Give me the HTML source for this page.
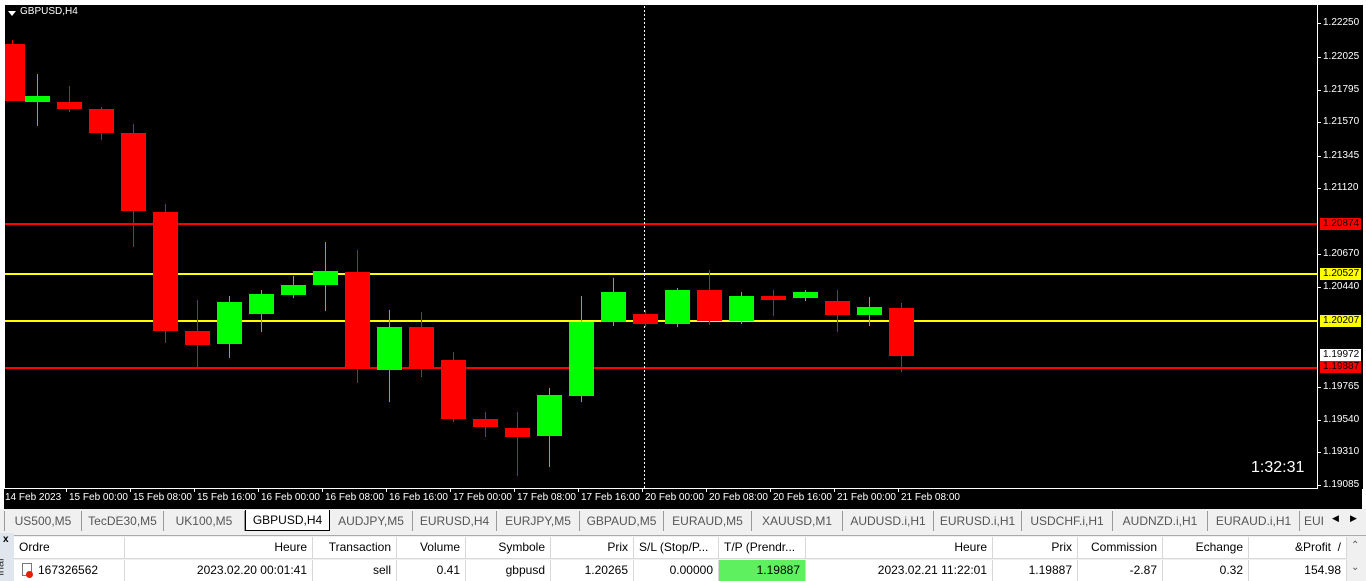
<!DOCTYPE html><html><head><style>
body{margin:0;width:1366px;height:581px;overflow:hidden;background:#f0f0f0;font-family:"Liberation Sans",sans-serif;position:relative}
#ch{position:absolute;left:0;top:0;width:1366px;height:509px;background:#fff}
#blk{position:absolute;left:4px;top:4px;width:1358px;height:484px;background:#000;overflow:hidden;border-top:1px solid #fff;border-left:1px solid #fff}
.a{position:absolute}
.pl{position:absolute;left:1323px;font-size:10px;color:#fff;font-family:"Liberation Sans",sans-serif}
.tl{position:absolute;top:492px;font-size:10px;color:#fff;font-family:"Liberation Sans",sans-serif;white-space:nowrap}
.tab{position:absolute;top:511px;height:20px;line-height:20px;font-size:12px;color:#555;text-align:center;border-right:1px solid #999;box-sizing:border-box}
.th,.td{position:absolute;height:21px;line-height:21px;font-size:12px;color:#000;box-sizing:border-box;border-right:1px solid #d8d8d8;padding:0 5px;text-align:right;white-space:nowrap;overflow:hidden}
.th{top:537px;background:#fff}.td{top:560px;background:#fff}
</style></head><body>
<div id="ch"><div id="blk"></div></div>
<div class="a" style="left:4px;top:488px;width:1358px;height:21px;background:#000"></div>
<div class="a" style="left:1317px;top:4px;width:1px;height:485px;background:#fff"></div>
<div class="a" style="left:4px;top:488px;width:1314px;height:1px;background:#fff"></div>
<div class="a" style="left:8px;top:11px;width:0;height:0;border-left:4px solid transparent;border-right:4px solid transparent;border-top:5px solid #fff"></div>
<div class="a" style="left:20px;top:6px;font-size:10px;color:#fff">GBPUSD,H4</div>
<div class="a" style="left:1251px;top:459px;font-size:16px;color:#fff">1:32:31</div>
<div id="g"></div>
<div id="tabs"></div>
<div class="a" style="left:0;top:533px;width:14px;height:48px;background:#dfe6ee"></div>
<div class="a" style="left:3px;top:534px;font-size:10px;font-weight:bold">x</div>
<div class="a" style="left:-8px;top:561px;font-size:11px;transform:rotate(-90deg);color:#333">inal</div>
<div id="tb"></div>
<script>
var g='';
function d(x,y,w,h,c){g+='<div class="a" style="left:'+x+'px;top:'+y+'px;width:'+w+'px;height:'+h+'px;background:'+c+'"></div>';}
var C=[[12,'r',44,101,40,101],[37,'g',96,102,74,126],[69,'r',102,109,86,112],[101,'r',109,133,107,140],[133,'r',133,211,124,247],[165,'r',212,331,204,343],[197,'r',331,345,300,367],[229,'g',302,344,296,358],[261,'g',294,314,290,332],[293,'g',285,295,276,298],[325,'g',271,285,242,311],[357,'r',272,368,250,383],[389,'g',327,370,310,402],[421,'r',327,368,312,377],[453,'r',360,419,352,422],[485,'r',419,427,412,437],[517,'r',428,437,412,476],[549,'g',395,436,388,467],[581,'g',322,396,296,402],[613,'g',292,322,278,326],[645,'r',314,324,310,327],[677,'g',290,324,288,327],[709,'r',290,321,270,325],[741,'g',296,321,292,324],[773,'r',296,300,290,316],[805,'g',292,298,290,301],[837,'r',301,315,290,332],[869,'g',307,315,297,326],[901,'r',308,356,303,372]];
[[224,'#f00'],[274,'#ff0'],[321,'#ff0'],[368,'#f00']].forEach(function(l){d(5,l[0]-1,1312,2,l[1]);});
for(var y=6;y<488;y+=4)d(644,y,1,2,'#fff');
C.forEach(function(c){var col=c[1]=='r'?'#f00':'#0f0';var x=c[0];d(x,c[4],1,c[5]-c[4],col);var l=x-12;if(l<5)l=5;d(l,c[2],x+13-l,c[3]-c[2],col);});
var P=[['1.22250',23],['1.22025',57],['1.21795',90],['1.21570',122],['1.21345',156],['1.21120',188],['1.20670',254],['1.20440',287],['1.19765',387],['1.19540',420],['1.19310',452],['1.19085',485]];
P.forEach(function(p){d(1318,p[1],3,1,'#fff');g+='<div class="pl" style="top:'+(p[1]-6)+'px">'+p[0]+'</div>';});
[['1.20874',224,'#f00','#000'],['1.20527',274,'#ff0','#000'],['1.20207',321,'#ff0','#000'],['1.19972',355,'#fff','#000'],['1.19887',367,'#f00','#000']].forEach(function(p){g+='<div class="pl" style="left:1320px;top:'+(p[1]-6)+'px;width:41px;height:12px;line-height:12px;background:'+p[2]+';color:'+p[3]+';padding-left:3px;box-sizing:border-box">'+p[0]+'</div>';});
var T=['14 Feb 2023','15 Feb 00:00','15 Feb 08:00','15 Feb 16:00','16 Feb 00:00','16 Feb 08:00','16 Feb 16:00','17 Feb 00:00','17 Feb 08:00','17 Feb 16:00','20 Feb 00:00','20 Feb 08:00','20 Feb 16:00','21 Feb 00:00','21 Feb 08:00'];
T.forEach(function(t,i){var x=5+i*64;if(i>0)d(x-3,488,1,4,'#fff');g+='<div class="tl" style="left:'+x+'px">'+t+'</div>';});
document.getElementById('g').innerHTML=g;
var tabs=[['US500,M5',5,82],['TecDE30,M5',82,164],['UK100,M5',164,245],['GBPUSD,H4',245,330],['AUDJPY,M5',330,413],['EURUSD,H4',413,497],['EURJPY,M5',497,580],['GBPAUD,M5',580,664],['EURAUD,M5',664,752],['XAUUSD,M1',752,843],['AUDUSD.i,H1',843,934],['EURUSD.i,H1',934,1022],['USDCHF.i,H1',1022,1113],['AUDNZD.i,H1',1113,1208],['EURAUD.i,H1',1208,1300],['EUI',1300,1330]],s='<div class="tab" style="left:0;width:5px"></div>';
tabs.forEach(function(t,i){var act=i==3;s+='<div class="tab" style="left:'+t[1]+'px;width:'+(t[2]-t[1])+'px;'+(act?'background:#fff;color:#000;border:1px solid #000;border-top:none;top:510px;height:21px;':'')+(i==15?'border:none;text-align:left;padding-left:4px;':'')+'">'+t[0]+'</div>';});
s+='<div class="a" style="left:1332px;top:513px;font-size:9px">&#9664;</div><div class="a" style="left:1350px;top:513px;font-size:9px">&#9654;</div>';
document.getElementById('tabs').innerHTML=s;
var cols=[14,125,313,397,466,551,634,719,806,993,1078,1163,1249,1347];
var H=['Ordre','Heure','Transaction','Volume','Symbole','Prix','S/L (Stop/P...','T/P (Prendr...','Heure','Prix','Commission','Echange','&amp;Profit &nbsp;/'];
var R=['167326562','2023.02.20 00:01:41','sell','0.41','gbpusd','1.20265','0.00000','1.19887','2023.02.21 11:22:01','1.19887','-2.87','0.32','154.98'];
var t='<div class="a" style="left:14px;top:535px;width:1352px;height:1px;background:#aaa"></div>';
for(var i=0;i<13;i++){var w=cols[i+1]-cols[i];
t+='<div class="th" style="left:'+cols[i]+'px;width:'+w+'px;text-align:'+(i==0||i==6||i==7?'left':'right')+'">'+H[i]+'</div>';
t+='<div class="td" style="left:'+cols[i]+'px;width:'+w+'px;text-align:'+(i==0?'left':'right')+';'+(i==7?'background:#5ef05e;':'')+(i==0?'padding-left:24px;':'')+'">'+R[i]+'</div>';}
t+='<div class="a" style="left:14px;top:558px;width:1333px;height:1px;background:#d8d8d8"></div>';
t+='<div class="a" style="left:22px;top:563px;width:10px;height:13px;border:1px solid #777;background:#fff;box-sizing:border-box"></div><div class="a" style="left:26px;top:571px;width:7px;height:7px;border-radius:50%;background:#e02000"></div>';
t+='<div class="a" style="left:1347px;top:537px;width:19px;height:44px;background:#f0f0f0"></div><div class="a" style="left:1351px;top:540px;font-size:10px;color:#555">&#8963;</div><div class="a" style="left:1351px;top:562px;font-size:10px;color:#555">&#8964;</div>';
document.getElementById('tb').innerHTML=t;
</script>
</body></html>
